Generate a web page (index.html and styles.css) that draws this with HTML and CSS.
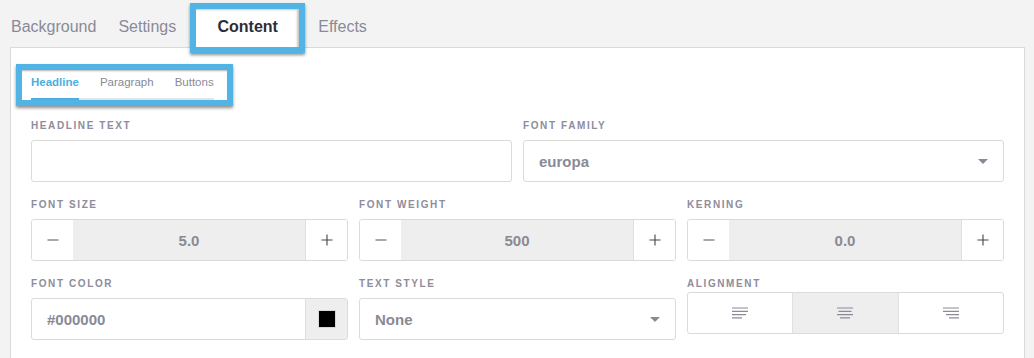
FILE: index.html
```html
<!DOCTYPE html>
<html>
<head>
<meta charset="utf-8">
<link rel="stylesheet" href="styles.css">
</head>
<body>
<div class="tabs">
  <div class="tab">Background</div>
  <div class="tab">Settings</div>
  <div class="tab tab-active">Content</div>
  <div class="tab">Effects</div>
</div>
<div class="panel">
  <div class="subnav-frame">
    <div class="subnav">
      <div class="subtab subtab-active">Headline</div>
      <div class="subtab">Paragraph</div>
      <div class="subtab">Buttons</div>
    </div>
  </div>
  <div class="form">
    <div class="row row-2">
      <div class="field">
        <div class="label">HEADLINE TEXT</div>
        <div class="control"></div>
      </div>
      <div class="field">
        <div class="label">FONT FAMILY</div>
        <div class="control"><span class="control-text">europa</span><span class="caret"></span></div>
      </div>
    </div>
    <div class="row row-3">
      <div class="field">
        <div class="label">FONT SIZE</div>
        <div class="control stepper">
          <span class="step-btn"><svg width="12" height="12" viewBox="0 0 12 12"><path d="M0.5 6H11.5" stroke="#555" stroke-width="1.1"/></svg></span>
          <span class="step-value">5.0</span>
          <span class="step-btn step-plus"><svg width="12" height="12" viewBox="0 0 12 12"><path d="M0.5 6H11.5M6 0.5V11.5" stroke="#444" stroke-width="1.1"/></svg></span>
        </div>
      </div>
      <div class="field">
        <div class="label">FONT WEIGHT</div>
        <div class="control stepper">
          <span class="step-btn"><svg width="12" height="12" viewBox="0 0 12 12"><path d="M0.5 6H11.5" stroke="#555" stroke-width="1.1"/></svg></span>
          <span class="step-value">500</span>
          <span class="step-btn step-plus"><svg width="12" height="12" viewBox="0 0 12 12"><path d="M0.5 6H11.5M6 0.5V11.5" stroke="#444" stroke-width="1.1"/></svg></span>
        </div>
      </div>
      <div class="field">
        <div class="label">KERNING</div>
        <div class="control stepper">
          <span class="step-btn"><svg width="12" height="12" viewBox="0 0 12 12"><path d="M0.5 6H11.5" stroke="#555" stroke-width="1.1"/></svg></span>
          <span class="step-value">0.0</span>
          <span class="step-btn step-plus"><svg width="12" height="12" viewBox="0 0 12 12"><path d="M0.5 6H11.5M6 0.5V11.5" stroke="#444" stroke-width="1.1"/></svg></span>
        </div>
      </div>
    </div>
    <div class="row row-3">
      <div class="field">
        <div class="label">FONT COLOR</div>
        <div class="control"><span class="control-text">#000000</span><span class="swatch"><span class="swatch-chip"></span></span></div>
      </div>
      <div class="field">
        <div class="label">TEXT STYLE</div>
        <div class="control"><span class="control-text">None</span><span class="caret"></span></div>
      </div>
      <div class="field">
        <div class="label label-tight">ALIGNMENT</div>
        <div class="control align">
          <span class="align-btn"><svg width="16" height="12" viewBox="0 0 16 12"><path d="M0 1H16M0 4.3H16M0 7.6H14M0 10.9H10" stroke="#8a8a98" stroke-width="1.2"/></svg></span>
          <span class="align-btn align-active"><svg width="16" height="12" viewBox="0 0 16 12"><path d="M0 1H16M1.5 4.3H14.5M0 7.6H16M3 10.9H13" stroke="#8a8a98" stroke-width="1.2"/></svg></span>
          <span class="align-btn"><svg width="16" height="12" viewBox="0 0 16 12"><path d="M0 1H16M0 4.3H16M3 7.6H16M6 10.9H16" stroke="#8a8a98" stroke-width="1.2"/></svg></span>
        </div>
      </div>
    </div>
  </div>
</div>
</body>
</html>
```

FILE: styles.css
```css
html, body {
  margin: 0;
  padding: 0;
  background: #f3f3f3;
  font-family: "Liberation Sans", Arial, sans-serif;
  overflow: hidden;
}

.tabs {
  display: flex;
  align-items: flex-start;
  height: 47px;
  padding-top: 3px;
  box-sizing: border-box;
}

.tab {
  margin-top: 5px;
  padding: 0 11px;
  line-height: 38px;
  font-size: 16px;
  color: #8a8a99;
}

.tab-active {
  position: relative;
  z-index: 1;
  margin: 0 2px 0 3px;
  padding: 0 0 3px;
  width: 103px;
  line-height: 35px;
  text-align: center;
  font-weight: bold;
  color: #2d2d38;
  background: #fff;
  border: 6px solid #52b3e5;
  box-shadow: 0 2px 3px rgba(0, 0, 0, 0.45), inset -3px 2px 2px -1px rgba(0, 0, 0, 0.22);
}

.panel {
  margin-left: 10px;
  width: 1015px;
  box-sizing: border-box;
  border: 1px solid #d9d9d9;
  background: #fff;
  padding: 16px 20px 40px;
}

.subnav-frame {
  display: flex;
  width: max-content;
  margin-left: -15px;
  border: 6px solid #52b3e5;
  padding: 0 13px 0 9px;
  background: #fff;
  box-shadow: 0 2px 3px rgba(0, 0, 0, 0.45), inset 0 2px 2px -1px rgba(0, 0, 0, 0.3);
}

.subnav {
  display: flex;
  gap: 21px;
  border-bottom: 2px solid #e3e3e3;
}

.subtab {
  font-size: 11.5px;
  line-height: 14px;
  padding: 5px 0 9px;
  border-bottom: 2px solid transparent;
  margin-bottom: -2px;
  color: #8a8a98;
}

.subtab-active {
  color: #4aaee2;
  font-weight: bold;
  border-bottom-color: #4aaee2;
}

.form {
  margin-top: 13px;
  display: flex;
  flex-direction: column;
  gap: 16px;
}

.row {
  display: grid;
  gap: 11px;
}

.row-2 {
  grid-template-columns: 1fr 1fr;
}

.row-3 {
  grid-template-columns: 1fr 1fr 1fr;
}

.label {
  font-size: 10px;
  font-weight: bold;
  letter-spacing: 1.6px;
  line-height: 14px;
  color: #8d8d9b;
  margin-bottom: 7px;
}

.label-tight {
  margin-bottom: 1px;
}

.control {
  height: 42px;
  box-sizing: border-box;
  border: 1px solid #dadada;
  border-radius: 3px;
  display: flex;
  align-items: center;
  background: #fff;
  font-size: 15px;
  font-weight: bold;
  color: #8a8a96;
  overflow: hidden;
}

.control-text {
  flex: 1;
  padding: 0 15px;
}

.caret {
  width: 0;
  height: 0;
  border-left: 5px solid transparent;
  border-right: 5px solid transparent;
  border-top: 5px solid #8a8a96;
  margin-right: 15px;
}

.step-btn {
  width: 41px;
  height: 100%;
  display: flex;
  align-items: center;
  justify-content: center;
  background: #fff;
}

.step-plus {
  border-left: 1px solid #e0e0e0;
}

.step-value {
  flex: 1;
  height: 100%;
  display: flex;
  align-items: center;
  justify-content: center;
  background: #eeeeee;
}

.swatch {
  width: 41px;
  height: 100%;
  display: flex;
  align-items: center;
  justify-content: center;
  background: #eeeeee;
  border-left: 1px solid #dedede;
}

.swatch-chip {
  width: 16px;
  height: 16px;
  background: #000;
  box-shadow: 0 0 0 1px #d8d8d8;
}

.align-btn {
  flex: 1;
  height: 100%;
  display: flex;
  align-items: center;
  justify-content: center;
}

.align-btn + .align-btn {
  border-left: 1px solid #e0e0e0;
}

.align-active {
  background: #eeeeee;
}
```
